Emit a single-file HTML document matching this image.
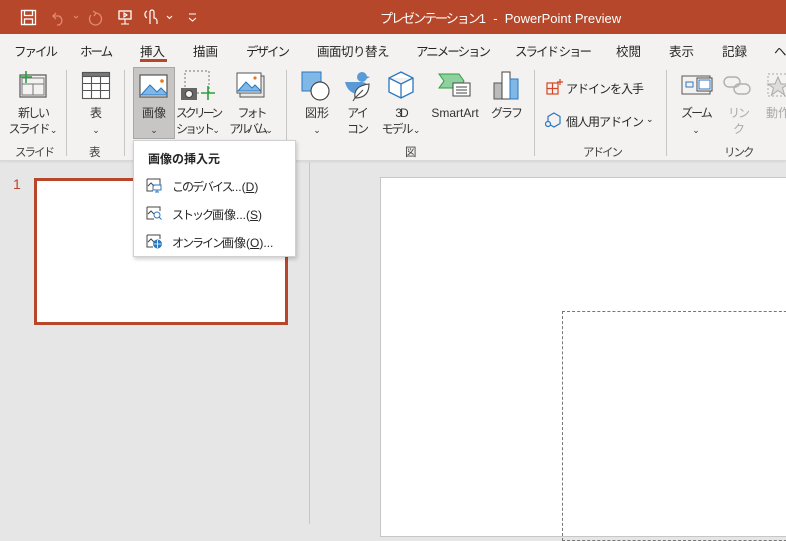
<!DOCTYPE html>
<html><head><meta charset="utf-8"><style>
*{margin:0;padding:0;box-sizing:border-box}
body{width:786px;height:524px;overflow:hidden;position:relative;background:#e6e6e6;font-family:"Liberation Sans","Noto Sans CJK JP",sans-serif;font-size:12px;color:#262626}
.a{position:absolute;white-space:nowrap}
#title{left:0;top:0;width:786px;height:34px;background:#b7472a}
#rib{left:0;top:34px;width:786px;height:127px;background:#f3f2f1;border-bottom:1px solid #d8d8d8;box-shadow:0 1px 2px rgba(0,0,0,.08)}
.tab{top:41px;font-size:12.5px;color:#262626}
.lbl{font-size:12px;text-align:center;line-height:16px;color:#333}
.grp{top:144px;font-size:11.5px;color:#444}
.sep{width:1px;background:#c8c6c4;top:70px;height:86px}
.chev{font-size:9px;letter-spacing:0}
.k{letter-spacing:-2px}
.kk{letter-spacing:-3px}
</style></head><body>
<div id="title" class="a"></div>
<svg class="a" style="left:20px;top:8px" width="180" height="20" viewBox="0 0 180 20" fill="none" stroke="#fff" stroke-width="1.3">
<rect x="1.5" y="2.5" width="14" height="14"/><rect x="4.5" y="2.5" width="8" height="5"/><rect x="4.5" y="11" width="8" height="5.5"/>
<path d="M36 5 l-3 3 l3 3 M33 8 h6 a5 5 0 0 1 0 9 h-2" stroke="#e08a74"/>
<path d="M54 8 l2 2 l2 -2" stroke="#e08a74" stroke-width="1"/>
<path d="M76 5 a6 6 0 1 1 -5 2 M76 5 l-3 -2 M76 5 l-2 3" stroke="#e08a74"/>
<rect x="99" y="3" width="12" height="8"/><path d="M105 11 v5 M101 16 h8 M104 5 l3 2 l-3 2z" stroke-width="1.1"/>
<path d="M130 16 v-12 a2 2 0 0 1 4 0 v6 a3 3 0 0 1 3 3 v3 M127 10 a4 4 0 0 1 0 -7" stroke-width="1.2"/>
<path d="M147 8 l2.5 2.5 l2.5 -2.5" stroke-width="1.1"/>
<path d="M169 6 h7 M169 10 l3.5 3 l3.5 -3" stroke-width="1.1"/>
</svg>
<div class="a" style="left:380px;top:8px;color:#fff;font-size:13px"><span class="k">プレゼンテーション</span>1 &nbsp;-&nbsp; PowerPoint Preview</div>

<div id="rib" class="a"></div>
<div class="a tab k" style="left:14px">ファイル</div>
<div class="a tab k" style="left:80px">ホーム</div>
<div class="a tab" style="left:140px">挿入</div>
<div class="a" style="left:140px;top:59px;width:27px;height:3px;background:#b7472a"></div>
<div class="a tab" style="left:193px">描画</div>
<div class="a tab k" style="left:246px">デザイン</div>
<div class="a tab" style="left:317px;letter-spacing:-0.5px">画面切り替え</div>
<div class="a tab k" style="left:416px">アニメーション</div>
<div class="a tab k" style="left:515px">スライド ショー</div>
<div class="a tab" style="left:616px">校閲</div>
<div class="a tab" style="left:669px">表示</div>
<div class="a tab" style="left:722px">記録</div>
<div class="a tab" style="left:774px">ヘ</div>

<div class="a sep" style="left:66px"></div>
<div class="a sep" style="left:124px"></div>
<div class="a sep" style="left:286px"></div>
<div class="a sep" style="left:534px"></div>
<div class="a sep" style="left:666px"></div>

<svg class="a" style="left:16px;top:70px" width="34" height="30" viewBox="0 0 34 30" fill="none">
<rect x="4" y="5" width="26" height="22" stroke="#555" stroke-width="1.2"/><rect x="6" y="8" width="22" height="17" stroke="#777"/><path d="M17 14 v11 M6 14 h22" stroke="#777"/>
<path d="M10 1 v12 M4 7 h12" stroke="#2e9e3e" stroke-width="1.6"/></svg>
<div class="a lbl k" style="left:6px;top:105px;width:54px">新しい<br>スライド <span class="chev">⌄</span></div>
<div class="a grp k" style="left:15px">スライド</div>
<svg class="a" style="left:81px;top:71px" width="30" height="30" viewBox="0 0 30 30" fill="none" stroke="#555" stroke-width="1.1">
<rect x="1.5" y="1.5" width="27" height="26" fill="#fff"/><rect x="1.5" y="1.5" width="27" height="4" fill="#777"/>
<path d="M10.5 5.5 v22 M19.5 5.5 v22 M1.5 12.5 h27 M1.5 19.5 h27"/></svg>
<div class="a lbl" style="left:80px;top:105px;width:32px">表<br><span class="chev">⌄</span></div>
<div class="a grp" style="left:89px">表</div>
<div class="a" style="left:133px;top:67px;width:42px;height:72px;background:#c8c6c4;border:1px solid #a9a7a5"></div>
<svg class="a" style="left:139px;top:74px" width="30" height="26" viewBox="0 0 30 26" fill="none">
<rect x="1" y="1" width="27" height="22" fill="#fff" stroke="#555" stroke-width="1.2"/>
<path d="M2 21 l9 -10 l7 7 l4 -4 l6 6 v1 h-26z" fill="#7fb8e6" stroke="#2b77c0"/>
<circle cx="23" cy="7" r="1.8" fill="#e8761f"/></svg>
<div class="a lbl" style="left:134px;top:105px;width:40px">画像<br><span class="chev">⌄</span></div>
<svg class="a" style="left:181px;top:70px" width="36" height="34" viewBox="0 0 36 34" fill="none">
<rect x="4" y="1" width="24" height="22" stroke="#777" stroke-dasharray="2 2"/>
<rect x="0" y="18" width="16" height="12" fill="#666"/><circle cx="8" cy="24" r="3.5" fill="#f3f2f1" stroke="#444"/>
<path d="M27 16 v14 M20 23 h14" stroke="#2e9e3e" stroke-width="1.6"/></svg>
<div class="a lbl kk" style="left:175px;top:105px;width:46px">スクリーン<br>ショット <span class="chev">⌄</span></div>
<svg class="a" style="left:236px;top:72px" width="30" height="30" viewBox="0 0 30 30" fill="none">
<rect x="4" y="4" width="24" height="21" fill="#e8e8e8" stroke="#555"/>
<rect x="1" y="1" width="24" height="20" fill="#fff" stroke="#555"/>
<path d="M2 19 l8 -9 l6 6 l3 -3 l5 5 v1 h-22z" fill="#7fb8e6" stroke="#2b77c0"/><circle cx="19" cy="6" r="1.6" fill="#e8761f"/></svg>
<div class="a lbl kk" style="left:224px;top:105px;width:54px">フォト<br>アルバム <span class="chev">⌄</span></div>
<svg class="a" style="left:300px;top:70px" width="32" height="32" viewBox="0 0 32 32">
<rect x="2" y="2" width="19" height="19" fill="#7fb8e6" stroke="#2b77c0"/><circle cx="20" cy="21" r="9" fill="#fff" stroke="#444" stroke-width="1.2"/></svg>
<div class="a lbl" style="left:300px;top:105px;width:34px">図形<br><span class="chev">⌄</span></div>
<svg class="a" style="left:343px;top:70px" width="30" height="32" viewBox="0 0 30 32">
<circle cx="19" cy="7" r="5" fill="#5b9bd5"/><path d="M2 12 q3 12 14 12 l8 -4 q2 -8 -6 -8z" fill="#5b9bd5"/><path d="M23 6 l4 1 l-4 2z" fill="#5b9bd5"/>
<path d="M12 28 q-2 -12 14 -14 q0 14 -14 14z M12 28 l-2 3 M12 28 l8 -8" fill="#fff" stroke="#444" stroke-width="1.1"/></svg>
<div class="a lbl k" style="left:343px;top:105px;width:28px">アイ<br>コン</div>
<svg class="a" style="left:387px;top:70px" width="28" height="30" viewBox="0 0 28 30" fill="none" stroke="#2b77c0" stroke-width="1.3">
<path d="M14 2 l12 6 v14 l-12 6 l-12 -6 v-14z M2 8 l12 6 l12 -6 M14 14 v14" fill="#fff"/></svg>
<div class="a lbl k" style="left:378px;top:105px;width:46px">3D<br>モデル <span class="chev">⌄</span></div>
<svg class="a" style="left:438px;top:72px" width="34" height="30" viewBox="0 0 34 30">
<path d="M1 2 h20 l5 7 l-5 7 h-20 l5 -7z" fill="#8fd19e" stroke="#2e9e3e"/>
<rect x="15" y="11" width="17" height="13" fill="#fff" stroke="#444"/><path d="M18 15 h11 M18 18 h11 M18 21 h11" stroke="#444"/></svg>
<div class="a lbl" style="left:426px;top:105px;width:58px">SmartArt</div>
<svg class="a" style="left:492px;top:70px" width="28" height="32" viewBox="0 0 28 32">
<rect x="2" y="13" width="8" height="16" fill="#bbb" stroke="#555"/><rect x="10" y="2" width="8" height="27" fill="#fff" stroke="#444"/><rect x="18" y="9" width="8" height="20" fill="#7fb8e6" stroke="#2b77c0"/></svg>
<div class="a lbl k" style="left:490px;top:105px;width:32px">グラフ</div>
<div class="a grp" style="left:405px">図</div>
<svg class="a" style="left:546px;top:78px" width="18" height="18" viewBox="0 0 18 18" fill="none" stroke="#d24726" stroke-width="1.2">
<rect x="1" y="5" width="11" height="11"/><path d="M6.5 5 v11 M1 10.5 h11 M14 1 v6 M11 4 h6"/></svg>
<div class="a" style="left:566px;top:80px;font-size:12px;letter-spacing:-1px">アドインを入手</div>
<svg class="a" style="left:545px;top:111px" width="18" height="18" viewBox="0 0 18 18" fill="none" stroke="#2b77c0" stroke-width="1.2">
<path d="M9 2 l6 3.5 v7 l-6 3.5 l-6 -3.5 v-7z"/><circle cx="3" cy="13" r="2.5" fill="#f3f2f1"/></svg>
<div class="a" style="left:566px;top:113px;font-size:12px;letter-spacing:-1px">個人用アドイン</div>
<div class="a chev" style="left:646px;top:114px">⌄</div>
<div class="a grp k" style="left:583px">アドイン</div>
<svg class="a" style="left:681px;top:72px" width="34" height="26" viewBox="0 0 34 26" fill="none">
<rect x="1" y="4" width="28" height="18" stroke="#555"/><rect x="5" y="10" width="7" height="5" stroke="#2b77c0"/><rect x="16" y="6" width="15" height="13" fill="#fff" stroke="#444"/><rect x="18" y="8" width="11" height="9" stroke="#2b77c0"/></svg>
<div class="a lbl k" style="left:677px;top:105px;width:38px">ズーム<br><span class="chev">⌄</span></div>
<svg class="a" style="left:722px;top:74px" width="32" height="24" viewBox="0 0 32 24" fill="none" stroke="#b0b0b0" stroke-width="1.4">
<rect x="2" y="3" width="16" height="10" rx="5"/><rect x="12" y="10" width="16" height="10" rx="5"/></svg>
<div class="a lbl k" style="left:724px;top:105px;width:28px;color:#aaa">リン<br>ク</div>
<svg class="a" style="left:766px;top:72px" width="20" height="30" viewBox="0 0 20 30" fill="none" stroke="#aaa">
<rect x="2" y="2" width="24" height="22" stroke-dasharray="2 2"/><path d="M12 5 l3 7 h7 l-5.5 4 l2 7 l-6.5 -4.5 l-6.5 4.5 l2 -7 l-5.5 -4 h7z" fill="#ddd"/></svg>
<div class="a lbl" style="left:766px;top:105px;color:#aaa">動作</div>
<div class="a grp k" style="left:724px">リンク</div>

<div class="a" style="left:309px;top:162px;width:1px;height:362px;background:#c8c6c4"></div>
<div class="a" style="left:13px;top:176px;color:#b7472a;font-size:14px">1</div>
<div class="a" style="left:34px;top:178px;width:254px;height:147px;border:3px solid #b7472a;background:#fff"></div>
<div class="a" style="left:380px;top:177px;width:420px;height:360px;background:#fff;border:1px solid #c8c6c4"></div>
<div class="a" style="left:562px;top:311px;width:240px;height:230px;border:1px dashed #777"></div>

<div class="a" style="left:133px;top:140px;width:163px;height:117px;background:#fff;border:1px solid #d0d0d0;box-shadow:1px 2px 4px rgba(0,0,0,.2)"></div>
<div class="a" style="left:148px;top:150px;font-weight:bold;font-size:12px">画像の挿入元</div>
<svg class="a" style="left:146px;top:178px" width="16" height="76" viewBox="0 0 16 76" fill="none" stroke="#444" stroke-width="1">
<path d="M1 1 h13 v6 M1 1 v12 h6 M2 8 l3 -3 l3 3"/><rect x="7" y="7" width="8" height="5" stroke="#2b77c0"/><path d="M11 12 v2 M9 14 h4" stroke="#2b77c0"/>
<path d="M1 29 h13 v4 M1 29 v12 h7 M2 36 l3 -3 l3 3"/><circle cx="11" cy="37" r="3" stroke="#2b77c0"/><path d="M13 39 l2.5 2.5" stroke="#2b77c0"/>
<path d="M1 57 h13 v4 M1 57 v12 h6 M2 64 l3 -3 l3 3"/><circle cx="11.5" cy="66" r="4" fill="#2b77c0" stroke="#2b77c0"/><path d="M7.5 66 h8 M11.5 62 v8" stroke="#fff" stroke-width=".8"/></svg>
<div class="a" style="left:172px;top:178px;font-size:12px"><span class="k">このデバイス</span>...(<u>D</u>)</div>
<div class="a" style="left:172px;top:206px;font-size:12px"><span class="k">ストック</span>画像...(<u>S</u>)</div>
<div class="a" style="left:172px;top:234px;font-size:12px"><span class="k">オンライン</span>画像(<u>O</u>)...</div>
</body></html>
